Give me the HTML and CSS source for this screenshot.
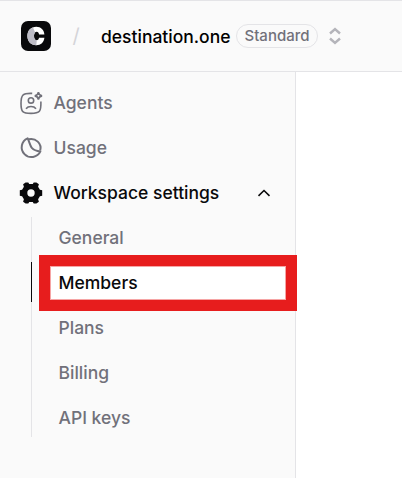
FILE: index.html
```html
<!DOCTYPE html>
<html lang="en">
<head>
    <meta charset="UTF-8">
    <meta name="viewport" content="width=device-width, initial-scale=1.0">
    <title>Workspace settings</title>
    <link rel="stylesheet" href="styles.css">
</head>
<body>
    <header class="topbar">
        <svg class="logo" viewBox="0 0 30 30">
            <rect width="30" height="30" rx="7" fill="#09090b"/>
            <path d="M18 13.4C17.8 11.6 17 10.8 15.8 10.8C14 10.8 13 12.3 13 15C13 17.7 14 19.2 15.8 19.2C17 19.2 17.8 18.4 18 16.8H23.4C23 21.3 20 24.2 15.3 24.2C10 24.2 6.4 20.5 6.4 15C6.4 9.5 10 5.8 15.3 5.8C20 5.8 23 9 23.4 13.4Z" fill="#fff"/>
            <path d="M12 6.4C8.6 7.5 6.4 10.7 6.4 15C6.4 20.5 10 24.2 15.3 24.2L15.8 19.2C14 19.2 13 17.7 13 15C13 13.4 13.4 12.1 14.2 11.4Z" fill="#bdbcc6"/>
        </svg>
        <span class="slash">/</span>
        <span class="workspace-name">destination.one</span>
        <span class="plan-badge">Standard</span>
        <svg class="switcher" viewBox="0 0 14 18">
            <path d="M2 6.5L7 2L12 6.5M2 11.5L7 16L12 11.5" fill="none" stroke="#b4b4ba" stroke-width="2.4"/>
        </svg>
    </header>

    <div class="layout">
        <nav class="sidebar">
            <a class="nav-item">
                <svg class="nav-icon" viewBox="0 0 24 24" fill="none" stroke="#71717a" stroke-width="1.6">
                    <path d="M13.2 2.4C4.2 2 2 3.2 2 12.5C2 21 3.6 22.4 12 22.4C20.8 22.4 22.2 20.8 21.9 10.4"/>
                    <circle cx="12" cy="9.4" r="2.7"/>
                    <path d="M7 17.7C9.2 14.8 14.8 14.8 17 17.7"/>
                    <path d="M19.4 1.2Q19.8 4.5 23.1 4.9Q19.8 5.3 19.4 8.6Q19 5.3 15.7 4.9Q19 4.5 19.4 1.2Z"/>
                </svg>
                <span>Agents</span>
            </a>
            <a class="nav-item">
                <svg class="nav-icon" viewBox="0 0 24 24" fill="none" stroke="#71717a" stroke-width="2" stroke-linejoin="round">
                    <path d="M8.6 2.3A9.8 9.8 0 1 0 21.4 15.4C17.6 15 14.6 13.8 12.8 11.8C11 9.8 10.4 5.6 8.6 2.3Z"/>
                    <path d="M9.6 3.3C16.5 1.5 23.2 7.5 21.2 14.6"/>
                </svg>
                <span>Usage</span>
            </a>
            <a class="nav-item active">
                <svg class="nav-icon" viewBox="0 0 24 24">
                    <path fill="#09090b" fill-rule="evenodd" d="M6.6 1.5L9.3 1.5L10.2 3H13.8L14.7 1.5L17.4 1.5L19.9 3.2L19.1 5.8L20.9 8.8L23.2 9.2V14.8L20.9 15.2L19.1 18.2L19.9 20.8L17.4 22.5H14.7L13.8 21H10.2L9.3 22.5H6.6L4.1 20.8L4.9 18.2L3.1 15.2L0.8 14.8V9.2L3.1 8.8L4.9 5.8L4.1 3.2ZM12 8.3A3.7 3.7 0 1 0 12 15.7A3.7 3.7 0 1 0 12 8.3Z"/>
                </svg>
                <span>Workspace settings</span>
                <svg class="chevron" viewBox="0 0 14 8">
                    <path d="M1.5 6.8L7 1.5L12.5 6.8" fill="none" stroke="#09090b" stroke-width="1.6"/>
                </svg>
            </a>
            <div class="subnav">
                <a class="subnav-item">General</a>
                <a class="subnav-item active">Members</a>
                <a class="subnav-item">Plans</a>
                <a class="subnav-item">Billing</a>
                <a class="subnav-item">API keys</a>
                <div class="highlight"></div>
            </div>
        </nav>
        <main class="content"></main>
    </div>
</body>
</html>
```
FILE: styles.css
```css
* {
    box-sizing: border-box;
}

body {
    margin: 0;
    height: 478px;
    overflow: hidden;
    display: flex;
    flex-direction: column;
    background: #fff;
    color: #09090b;
    font-family: Inter, "Liberation Sans", sans-serif;
    font-size: 17.5px;
    font-weight: 500;
    line-height: 24px;
}

.topbar {
    height: 72px;
    flex: none;
    display: flex;
    align-items: center;
    padding-left: 21px;
    background: #fafafa;
    border-top: 1px solid #e4e4e7;
    border-bottom: 1px solid #e4e4e7;
}

.logo {
    width: 30px;
    height: 30px;
}

.slash {
    width: 50px;
    text-align: center;
    color: #d4d4d8;
    font-size: 20px;
    font-weight: 400;
}

.workspace-name {
    width: 135px;
    padding-top: 2px;
    white-space: nowrap;
    color: #000;
}

.plan-badge {
    width: 82px;
    height: 24px;
    border: 1px solid #e4e4e7;
    border-radius: 12px;
    text-align: center;
    color: #71717a;
    font-size: 15px;
    line-height: 22px;
}

.switcher {
    width: 14px;
    height: 18px;
    margin-left: 10px;
}

.layout {
    flex: 1;
    display: flex;
}

.sidebar {
    width: 296px;
    padding: 10px 0 0 19px;
    background: #fafafa;
    border-right: 1px solid #e4e4e7;
}

.nav-item {
    height: 40px;
    margin-bottom: 5px;
    padding-top: 1px;
    display: flex;
    align-items: center;
    gap: 10.5px;
    color: #71717a;
}

.nav-item.active,
.subnav-item.active {
    color: #09090b;
}

.nav-icon {
    width: 24px;
    height: 24px;
}

.chevron {
    width: 14px;
    height: 8px;
    margin-left: auto;
    margin-right: 24px;
}

.subnav {
    position: relative;
    height: 220px;
    margin-left: 12px;
    border-left: 1px solid #e4e4e7;
    display: flex;
    flex-direction: column;
    gap: 5px;
}

.subnav-item {
    height: 40px;
    margin-left: -1px;
    padding-left: 27.5px;
    line-height: 42px;
}

.subnav-item:not(.active) {
    color: #71717a;
}

.subnav-item.active {
    border-left: 1px solid #09090b;
    padding-left: 26.5px;
    background: linear-gradient(#fff, #fff) 19px 4px / 235px 34px no-repeat;
}

/* frame drawn over the active item */
.highlight {
    position: absolute;
    left: 7px;
    top: 38px;
    width: 258px;
    height: 56px;
    border: 11px solid #e71d1d;
    box-shadow: inset 0 0 0 1px #f6a5a5;
}

.content {
    flex: 1;
}
```
